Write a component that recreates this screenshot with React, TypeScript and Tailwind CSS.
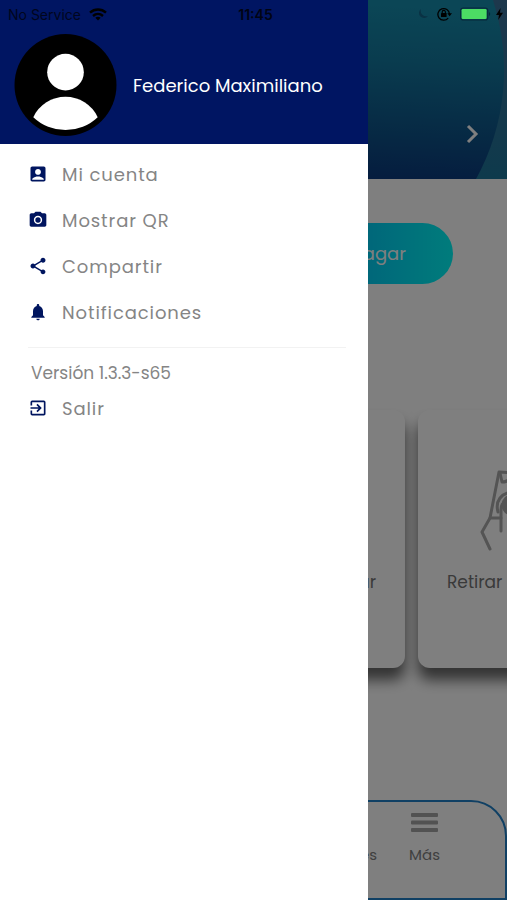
import type { ComponentType } from "react";
import {
  MdAccountBox,
  MdExitToApp,
  MdNotifications,
  MdPhotoCamera,
  MdShare,
} from "react-icons/md";

interface MenuEntry {
  label: string;
  icon: ComponentType<{ size?: number; className?: string }>;
}

const menuEntries: MenuEntry[] = [
  { label: "Mi cuenta", icon: MdAccountBox },
  { label: "Mostrar QR", icon: MdPhotoCamera },
  { label: "Compartir", icon: MdShare },
  { label: "Notificaciones", icon: MdNotifications },
];

function StatusBar() {
  return (
    <div className="absolute inset-x-0 top-0 z-20 grid h-7 grid-cols-3 items-center pl-2 pr-1 font-['Inter',sans-serif] text-[14px] text-black">
      <div className="flex items-center gap-2">
        <span className="opacity-70">No Service</span>
        <svg width="18" height="13" viewBox="0 0 18 13" aria-hidden="true">
          <g fill="none" stroke="currentColor" strokeWidth="2.4">
            <path d="M1 4.6C5.6.4 12.4.4 17 4.6" />
            <path d="M4 8C7 5.3 11 5.3 14 8" />
          </g>
          <path d="M6.3 9.8C7.9 8.5 10.1 8.5 11.7 9.8L9 12.6Z" fill="currentColor" />
        </svg>
      </div>
      <span className="text-center font-semibold opacity-80">11:45</span>
      <div className="flex items-center justify-end">
        <svg className="mr-2" width="12" height="12" viewBox="0 0 12 12" aria-hidden="true">
          <path d="M4 1A5 5 0 1 0 11 8A5.5 5.5 0 0 1 4 1Z" fill="#0a3244" />
        </svg>
        <svg className="mr-2" width="15" height="14" viewBox="0 0 15 14" aria-hidden="true">
          <path
            d="M11.2 11.1A5.8 5.8 0 1 1 12.5 7"
            fill="none"
            stroke="black"
            strokeWidth="1.3"
          />
          <path d="M10.3 6.2H15L12.6 9.3Z" fill="black" />
          <rect x="4" y="6" width="5.6" height="4" rx=".5" fill="black" />
          <path d="M5.2 6V5a1.6 1.6 0 0 1 3.2 0v1" fill="none" stroke="black" strokeWidth="1.1" />
        </svg>
        <svg className="mr-1" width="32" height="14" viewBox="0 0 32 14" aria-hidden="true">
          <rect
            x=".7"
            y="1"
            width="27"
            height="12"
            rx="2.5"
            fill="none"
            stroke="#07293a"
            strokeWidth="1.2"
          />
          <rect x="1.6" y="2" width="25" height="10" rx="1.2" fill="#4cdc64" />
          <path d="M29 5c1.6.6 1.6 3.4 0 4z" fill="#07293a" />
        </svg>
        <svg width="7" height="12" viewBox="0 0 7 12" aria-hidden="true">
          <path d="M4.6 0L0 7H3L2.2 12L7 4.8H4Z" fill="black" />
        </svg>
      </div>
    </div>
  );
}

function HomeHeader() {
  return (
    <header className="relative flex h-[179px] items-end justify-end overflow-hidden bg-linear-to-b from-[#3a7098] to-[#1c7498] pb-8 pr-6">
      <svg
        className="absolute right-0 top-0"
        width="507"
        height="179"
        viewBox="0 0 507 179"
        aria-hidden="true"
      >
        <defs>
          <linearGradient id="bubble" x1="0.55" y1="0" x2="0.4" y2="1">
            <stop offset="0" stopColor="#168cac" />
            <stop offset="0.3" stopColor="#13789e" />
            <stop offset="0.7" stopColor="#0d5288" />
            <stop offset="1" stopColor="#0a347c" />
          </linearGradient>
        </defs>
        <path d="M0 0H493A226 226 0 0 1 476 179H0Z" fill="url(#bubble)" />
      </svg>
      <svg className="relative" width="22" height="26" viewBox="0 0 22 26" aria-label="Siguiente">
        <path d="M7 5L15 13L7 21" fill="none" stroke="white" strokeWidth="3" />
      </svg>
    </header>
  );
}

function CashHandIcon() {
  return (
    <svg
      width="60"
      height="84"
      viewBox="0 0 60 84"
      fill="none"
      stroke="#a8a8a8"
      strokeWidth="3"
      strokeLinecap="round"
      strokeLinejoin="round"
      aria-hidden="true"
    >
      <path d="M60 4L20 2L11 48L3 62L11 79" />
      <path d="M11 48H22" />
      <path d="M22 61V40C22 30 31 30 31 38V60" />
      <path d="M21 3L23 12C27 12 31 10 32 5" />
      <path d="M19 42C16 31 22 23 34 22" />
      <circle cx="33" cy="35" r="9" fill="#a8a8a8" />
    </svg>
  );
}

function HomeScreen() {
  return (
    <div className="flex min-h-screen flex-col bg-white">
      <HomeHeader />
      <div className="px-[54px] pt-11">
        <button className="flex h-[61px] w-full items-center justify-end rounded-full bg-linear-to-r from-[#0096d8] from-40% via-[#00c8f4] via-75% to-[#00f8f8] pr-[47px] text-[18px] text-white">
          Pagar
        </button>
      </div>
      <div className="flex grow justify-end overflow-hidden pb-8 pt-[126px]">
        <div className="-mr-28 flex shrink-0 gap-[13px]">
          <button className="flex h-[258px] w-[200px] flex-col items-end justify-end rounded-xl bg-white px-[29px] pb-[73px] text-[17px] text-[#747474] shadow-[0_12px_14px_rgba(0,0,0,0.6)]">
            Cargar
          </button>
          <button className="flex h-[258px] w-[201px] flex-col items-start justify-end gap-4 rounded-xl bg-white px-[29px] pb-[73px] text-[17px] text-[#747474] shadow-[0_12px_14px_rgba(0,0,0,0.6)]">
            <span className="pl-8">
              <CashHandIcon />
            </span>
            Retirar
          </button>
        </div>
      </div>
      <nav className="flex h-[100px] items-start justify-end gap-8 rounded-tr-[36px] border-2 border-[#2080c8] pr-[65px] pt-[11px] text-[15px] text-[#808080]">
        <a href="#" className="pt-[31px]">
          Opciones
        </a>
        <a href="#" className="flex flex-col items-center gap-[11px]">
          <svg width="28" height="20" viewBox="0 0 28 20" fill="#a4a4a4" aria-hidden="true">
            <rect x="0" y="0" width="27" height="4" rx="1" />
            <rect x="0" y="7.5" width="27" height="4" rx="1" />
            <rect x="0" y="15" width="27" height="4" rx="1" />
          </svg>
          Más
        </a>
      </nav>
    </div>
  );
}

function MenuButton({ label, icon: Icon }: MenuEntry) {
  return (
    <button className="flex h-[46px] w-full items-center gap-[14px] text-[18px] tracking-wider text-[#858585]">
      <Icon size={20} className="text-[#00155f]" />
      {label}
    </button>
  );
}

function Drawer() {
  return (
    <aside className="absolute inset-y-0 left-0 z-10 w-[368px] max-w-full bg-white">
      <div className="flex h-36 items-end gap-4 bg-[#001562] px-[14px] pb-2 text-white">
        <svg width="103" height="102" viewBox="0 0 103 103" aria-hidden="true">
          <circle cx="51.5" cy="51.5" r="51.5" fill="black" />
          <circle cx="51.5" cy="38.5" r="18.5" fill="white" />
          <path d="M19 84A36 36 0 0 1 84 84A47 47 0 0 1 19 84Z" fill="white" />
        </svg>
        <span className="flex h-[102px] items-center text-[18px]">Federico Maximiliano</span>
      </div>
      <div className="px-7 pt-[7px]">
        {menuEntries.map((entry) => (
          <MenuButton key={entry.label} label={entry.label} icon={entry.icon} />
        ))}
        <hr className="mr-[-6px] mt-3 border-[#f2f2f2]" />
        <p className="pl-[3px] pt-[13px] text-[17px] leading-6 text-[#858585]">
          Versión 1.3.3-s65
        </p>
        <MenuButton label="Salir" icon={MdExitToApp} />
      </div>
    </aside>
  );
}

export default function App() {
  return (
    <div className="relative min-h-screen overflow-hidden font-['Poppins','Open_Sans',sans-serif]">
      <HomeScreen />
      <div className="absolute inset-0 bg-black/50" />
      <Drawer />
      <StatusBar />
    </div>
  );
}
